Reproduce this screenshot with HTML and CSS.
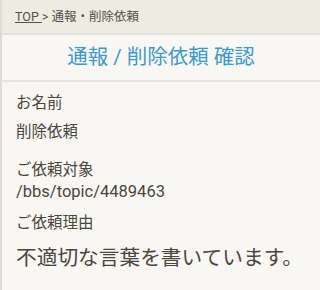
FILE: index.html
```html
<!DOCTYPE html>
<html lang="ja">
<head>
<meta charset="utf-8">
<link rel="stylesheet" href="styles.css">
</head>
<body>
<div class="page">
  <nav class="crumbs"><a href="#" class="crumb-link">TOP </a><span class="sep">&gt;</span> 通報・削除依頼</nav>
  <h1 class="title">通報 / 削除依頼 確認</h1>
  <div class="content">
    <div class="label first">お名前</div>
    <div class="value name">削除依頼</div>
    <div class="label target">ご依頼対象</div>
    <div class="value path">/bbs/topic/4489463</div>
    <div class="label reason">ご依頼理由</div>
    <div class="value big">不適切な言葉を書いています。</div>
  </div>
</div>
</body>
</html>
```
FILE: styles.css
```css
html, body {
  margin: 0;
  padding: 0;
  background: #f8f7f3;
}
body {
  font-family: Roboto, "Noto Sans CJK JP", sans-serif;
  color: #4a463e;
}
.page {
  border-left: 2px solid #dedcd6;
  min-height: 290px;
}
.crumbs {
  height: 33px;
  line-height: 33px;
  padding-left: 13px;
  font-size: 12.5px;
  color: #555049;
  background: #eeebe2;
  border-bottom: 2px solid #e3e1dc;
}
.crumb-link {
  color: #555049;
  text-decoration: underline;
}
.title {
  margin: 0;
  height: 45px;
  line-height: 45px;
  text-align: center;
  font-size: 20.5px;
  font-weight: normal;
  color: #3b9ad0;
  border-bottom: 2px solid #e6e4df;
}
.content {
  padding-left: 14px;
}
.label, .value {
  font-size: 15.5px;
}
.first { line-height: 24px; padding-top: 9px; }
.name { line-height: 24px; margin-top: 5px; }
.target { line-height: 22px; margin-top: 15px; }
.path { line-height: 22px; font-size: 16.5px; }
.reason { line-height: 22px; margin-top: 9px; }
.big { font-size: 20.7px; line-height: 30px; margin-top: 9px; }
```
